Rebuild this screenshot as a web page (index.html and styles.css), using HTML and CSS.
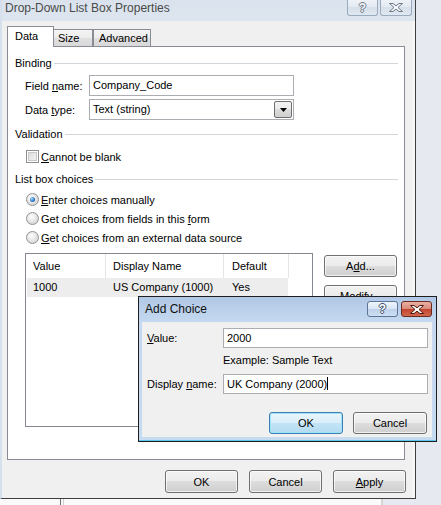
FILE: index.html
```html
<!DOCTYPE html>
<html lang="en">
<head>
<meta charset="utf-8">
<title>Drop-Down List Box Properties</title>
<link rel="stylesheet" href="styles.css">
</head>
<body>
<div class="screen">
  <div class="window">
    <div class="titlebar">
      <span class="title">Drop-Down List Box Properties</span>
      <div class="caption">
        <span class="cap-btn cap-help"><span class="qmark">?</span></span>
        <span class="cap-btn cap-close"><svg class="xglyph" width="14" height="9" viewBox="0 0 14 9"><polygon points="0.5,0.5 4,0.5 7,2.8 10,0.5 13.5,0.5 9,4.5 13.5,8.5 10,8.5 7,6.2 4,8.5 0.5,8.5 5,4.5"/></svg></span>
      </div>
    </div>
    <div class="client">
      <div class="tabs">
        <span class="tab tab-active">Data</span>
        <span class="tab tab-size">Size</span>
        <span class="tab tab-adv">Advanced</span>
      </div>
      <div class="panel">
        <div class="group"><span>Binding</span><span class="rule"></span></div>
        <div class="field first">
          <span class="lbl">Field <u>n</u>ame:</span>
          <span class="textbox">Company_Code</span>
        </div>
        <div class="field">
          <span class="lbl">Data <u>t</u>ype:</span>
          <span class="combo"><span class="combo-text">Text (string)</span><span class="combo-btn"><svg width="7" height="4" viewBox="0 0 7 4"><polygon points="0,0 7,0 3.5,4" fill="#000"/></svg></span></span>
        </div>
        <div class="group g-valid"><span>Validation</span><span class="rule"></span></div>
        <div class="option check-row"><span class="checkbox"></span><span><u>C</u>annot be blank</span></div>
        <div class="group g-list"><span>List box choices</span><span class="rule"></span></div>
        <div class="radios">
          <div class="option"><span class="radio checked"></span><span><u>E</u>nter choices manually</span></div>
          <div class="option"><span class="radio"></span><span>Get choices from fields in this <u>f</u>orm</span></div>
          <div class="option"><span class="radio"></span><span><u>G</u>et choices from an external data source</span></div>
        </div>
        <div class="choices">
          <div class="listview">
            <div class="lv-head">
              <span class="c1">Value</span>
              <span class="c2">Display Name</span>
              <span class="c3">Default</span>
              <span class="c4"></span>
            </div>
            <div class="lv-row">
              <span class="c1">1000</span>
              <span class="c2">US Company (1000)</span>
              <span class="c3">Yes</span>
            </div>
          </div>
          <div class="side">
            <button class="btn side-btn">A<u>d</u>d...</button>
            <button class="btn side-btn"><u>M</u>odify...</button>
          </div>
        </div>
      </div>
      <div class="footer">
        <button class="btn foot-btn">OK</button>
        <button class="btn foot-btn">Cancel</button>
        <button class="btn foot-btn"><u>A</u>pply</button>
      </div>
    </div>
  </div>
  <div class="under"></div>

  <div class="dialog">
    <div class="dlg-title">
      <span class="dlg-caption">Add Choice</span>
      <div class="caption dlg-buttons">
        <span class="cap-btn dlg-help"><span class="qmark dark">?</span></span>
        <span class="cap-btn dlg-close"><svg class="xglyph white" width="14" height="9" viewBox="0 0 14 9"><polygon points="0.5,0.5 4,0.5 7,2.8 10,0.5 13.5,0.5 9,4.5 13.5,8.5 10,8.5 7,6.2 4,8.5 0.5,8.5 5,4.5"/></svg></span>
      </div>
    </div>
    <div class="dlg-client">
      <div class="dlg-grid">
        <span class="dlg-lbl"><u>V</u>alue:</span>
        <span class="textbox dlg-input">2000</span>
        <span></span>
        <span class="example">Example: Sample Text</span>
        <span class="dlg-lbl row3">Display <u>n</u>ame:</span>
        <span class="textbox dlg-input row3">UK Company (2000)<span class="caret"></span></span>
      </div>
      <div class="dlg-actions">
        <button class="btn dlg-btn default">OK</button>
        <button class="btn dlg-btn">Cancel</button>
      </div>
    </div>
  </div>
</div>
</body>
</html>
```

FILE: styles.css
```css
* { box-sizing: border-box; }
html, body { margin: 0; padding: 0; }
body {
  width: 441px;
  height: 505px;
  overflow: hidden;
  background: #e6eaf0;
  font-family: "Liberation Sans", Arial, sans-serif;
  font-size: 11px;
  color: #000;
}
u { text-decoration: underline; text-underline-offset: 1px; }

.screen { position: relative; width: 441px; height: 505px; }

/* main window */
.window {
  width: 416px;
  height: 499px;
  border-left: 2px solid #d6e0ec;
  border-right: 1px solid #3e3e3e;
  border-bottom: 1px solid #3e3e3e;
  background: #f0f0f0;
  box-shadow: inset -2px 0 0 #f7f7f7;
  display: flex;
  flex-direction: column;
}
.titlebar {
  height: 21px;
  flex: none;
  display: flex;
  align-items: flex-start;
  padding: 0 3px 0 3px;
  background: linear-gradient(#dae3ed, #dde5ef);
}
.title {
  font-size: 12px;
  line-height: 17px;
  color: #4a4a4a;
}
.caption { margin-left: auto; display: flex; gap: 2px; }
.cap-btn {
  width: 31px;
  height: 16px;
  display: flex;
  align-items: center;
  justify-content: center;
  border: 1px solid #9aaabf;
  border-top: none;
  border-radius: 0 0 3px 3px;
  background: linear-gradient(#eef2f7, #e2e9f1 50%, #d7e0ea 50%, #dfe7f0);
}
.cap-close { width: 32px; }
.qmark {
  font-weight: bold;
  font-size: 12px;
  line-height: 12px;
  color: #f4f6f9;
  text-shadow: -1px 0 #6e7a8a, 1px 0 #6e7a8a, 0 -1px #6e7a8a, 0 1px #6e7a8a;
}
.qmark.dark {
  color: #fff;
  text-shadow: -1px 0 #3a4c66, 1px 0 #3a4c66, 0 -1px #3a4c66, 0 1px #3a4c66;
}
.xglyph polygon { fill: #f4f6f9; stroke: #6e7a8a; stroke-width: 1; stroke-linejoin: round; }
.xglyph.white polygon { fill: #fff; stroke: #4a1a12; }

.client {
  flex: 1;
  padding: 5px 0 0 5px;
}
.tabs {
  height: 20px;
  display: flex;
  align-items: flex-end;
}
.tab {
  height: 17px;
  line-height: 16px;
  border: 1px solid #898c95;
  border-bottom: none;
  background: linear-gradient(#f4f4f4, #ececec 50%, #e0e0e0 50%, #d9d9d9);
}
.tab-active {
  position: relative;
  z-index: 2;
  width: 47px;
  height: 21px;
  line-height: 18px;
  margin-bottom: -1px;
  padding-left: 7px;
  background: #fff;
}
.tab-size { width: 40px; margin-left: -1px; padding-left: 4px; }
.tab-adv { width: 58px; padding-left: 5px; }

.panel {
  width: 398px;
  height: 414px;
  border: 1px solid #898c95;
  background: #fff;
  padding: 9px 6px 0 7px;
}
.group {
  display: flex;
  align-items: center;
  height: 14px;
  line-height: 14px;
}
.rule { flex: 1; height: 1px; background: #d0d5da; margin-left: 2px; }
.g-valid { margin-top: 7px; }
.g-list { margin-top: 9px; }

.field {
  display: flex;
  align-items: center;
  height: 21px;
  margin-top: 3px;
  padding-left: 10px;
}
.field.first { margin-top: 5px; }
.lbl { width: 64px; }
.textbox {
  display: block;
  width: 205px;
  height: 21px;
  line-height: 19px;
  border: 1px solid #abadb3;
  background: #fff;
  padding-left: 3px;
  white-space: nowrap;
}
.combo {
  display: flex;
  width: 205px;
  height: 21px;
  border: 1px solid #abadb3;
  background: #fff;
}
.combo-text { flex: 1; line-height: 19px; padding-left: 3px; }
.combo-btn {
  width: 18px;
  height: 17px;
  margin: 1px 1px 0 0;
  border: 1px solid #707070;
  border-radius: 2px;
  background: linear-gradient(#f2f2f2, #ebebeb 50%, #dddddd 50%, #cfcfcf);
  display: flex;
  align-items: center;
  justify-content: center;
}

.option {
  display: flex;
  align-items: center;
  gap: 2px;
  height: 19px;
  padding-left: 11px;
}
.check-row { height: 13px; margin-top: 9px; }
.radios { margin-top: 4px; }
.checkbox {
  width: 13px;
  height: 13px;
  border: 1px solid #8e8f8f;
  background: linear-gradient(135deg, #d6d6d6, #f8f8f8);
  box-shadow: inset 0 0 0 1px #fff, inset 0 0 0 2px #c9c9c9;
  flex: none;
}
.radio {
  width: 13px;
  height: 13px;
  border-radius: 50%;
  border: 1px solid #8e8f8f;
  background: radial-gradient(circle at 40% 35%, #ffffff, #e2e2e2 55%, #cfcfcf);
  flex: none;
  display: flex;
  align-items: center;
  justify-content: center;
}
.radio.checked::after {
  content: "";
  width: 5px;
  height: 5px;
  border-radius: 50%;
  background: radial-gradient(circle at 35% 35%, #a5dcff, #2a74c0 60%, #1a4f8c);
}

.choices {
  display: flex;
  margin-top: 6px;
  padding-left: 10px;
}
.listview {
  width: 288px;
  height: 174px;
  border: 1px solid #828790;
  background: #fff;
}
.lv-head { display: flex; height: 24px; }
.lv-head span {
  line-height: 25px;
  padding-left: 7px;
  border-right: 1px solid #e5e5e5;
}
.lv-head .c1 { width: 80px; }
.lv-head .c2 { width: 118px; }
.lv-head .c3 { width: 65px; padding-left: 8px; }
.lv-head .c4 { flex: 1; border-right: none; }
.lv-row {
  display: flex;
  width: 261px;
  height: 19px;
  line-height: 19px;
  margin-left: 1px;
  background: #ededed;
}
.lv-row .c1 { width: 79px; padding-left: 6px; }
.lv-row .c2 { width: 118px; padding-left: 7px; }
.lv-row .c3 { width: 64px; padding-left: 8px; }

.btn {
  font: inherit;
  color: #000;
  padding: 0;
  margin: 0;
  text-align: center;
  border: 1px solid #707070;
  border-radius: 3px;
  background: linear-gradient(#f2f2f2, #ebebeb 50%, #dddddd 50%, #cfcfcf);
  box-shadow: inset 0 0 0 1px rgba(255, 255, 255, 0.7);
}
.side {
  display: flex;
  flex-direction: column;
  gap: 8px;
  margin-left: 11px;
  padding-top: 2px;
}
.side-btn { width: 73px; height: 22px; }

.footer {
  display: flex;
  gap: 11px;
  margin-top: 10px;
  padding-left: 158px;
}
.foot-btn { width: 73px; height: 23px; }

.under {
  width: 416px;
  height: 6px;
  background: linear-gradient(to right, #fafafa 60px, #6e6e6e 60px, #6e6e6e 61px, #fafafa 61px, #fafafa 63px, #d0d0d0 63px, #d0d0d0 64px, #fafafa 64px, #fafafa 381px, #d6d6d6 381px, #d6d6d6 383px, #e6eaf0 383px);
}

/* Add Choice dialog (overlay) */
.dialog {
  position: absolute;
  left: 138px;
  top: 296px;
  width: 299px;
  height: 146px;
  border: 1px solid #1e1e1e;
  padding: 0 4px 4px 3px;
  background: linear-gradient(#b0c8e6, #c6d9f0 26px, #c6daf0);
  box-shadow: inset 0 -1px 0 #5cc7ec;
  display: flex;
  flex-direction: column;
}
.dlg-title {
  height: 25px;
  flex: none;
  display: flex;
  align-items: flex-start;
}
.dlg-caption {
  font-size: 12px;
  line-height: 25px;
  padding-left: 3px;
  color: #111;
}
.dlg-buttons { gap: 3px; margin-top: 4px; }
.dlg-help, .dlg-close {
  width: 31px;
  height: 16px;
  border: 1px solid #5c7597;
  border-radius: 3px;
}
.dlg-help {
  background: linear-gradient(#eef4fb, #d8e5f4 50%, #bdd0e9 50%, #cddff3);
}
.dlg-close {
  border-color: #6a2a20;
  background: linear-gradient(#eab0a3, #d98b79 48%, #c2432e 52%, #d4684f);
}
.dlg-client {
  flex: 1;
  background: #f0f0f0;
  padding: 6px 0 0 5px;
}
.dlg-grid {
  display: grid;
  grid-template-columns: 76px 205px;
  align-items: center;
}
.dlg-input { height: 20px; line-height: 18px; }
.example { margin-top: 5px; line-height: 14px; }
.row3 { margin-top: 7px; }
.caret {
  display: inline-block;
  width: 1px;
  height: 13px;
  background: #000;
  vertical-align: -2px;
}
.dlg-actions {
  display: flex;
  justify-content: flex-end;
  gap: 10px;
  margin-top: 18px;
  padding-right: 1px;
  width: 281px;
}
.dlg-btn { width: 74px; height: 22px; }
.dlg-btn.default {
  border-color: #3c7fb1;
  background: linear-gradient(#e9f5fc, #d9eefa 50%, #c3e4f6 50%, #b4dbf1);
  box-shadow: inset 0 0 0 1px #9ee3fb;
}
```
